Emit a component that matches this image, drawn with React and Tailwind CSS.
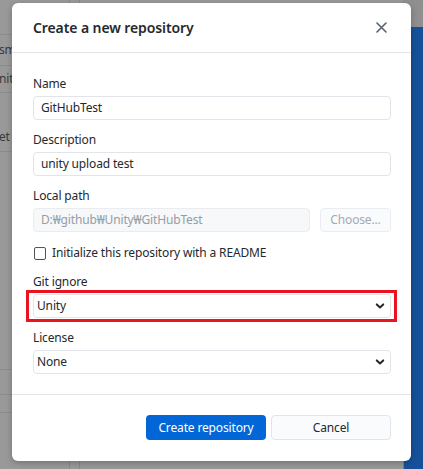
import React from "react";

function Field({ label, children, className = "" }) {
  return (
    <div className={"flex flex-col " + className}>
      <div className="h-[16px] leading-[16px] mb-[4px] text-[12px] text-[#24292e]">{label}</div>
      {children}
    </div>
  );
}

function Input({ value, disabled }) {
  return (
    <div
      className={
        "h-[24px] flex items-center px-[7px] rounded-[4px] border text-[12px] " +
        (disabled
          ? "bg-[#f6f8fa] border-[#eaecef] text-[#959da5]"
          : "bg-white border-[#e1e4e8] text-[#24292e]")
      }
    >
      {value}
    </div>
  );
}

function Select({ value }) {
  return (
    <div className="h-[24px] flex items-center justify-between pl-[3px] pr-[4px] rounded-[4px] border border-[#e1e4e8] bg-white text-[12px] text-[#24292e]">
      <span>{value}</span>
      <svg width="10" height="10" viewBox="0 0 10 10" className="mr-[1px]">
        <path d="M1.8 3.4 L5 6.4 L8.2 3.4" fill="none" stroke="#24292e" strokeWidth="2" strokeLinecap="round" strokeLinejoin="round" />
      </svg>
    </div>
  );
}

export default function App() {
  return (
    <div
      className="relative w-[423px] h-[469px] overflow-hidden bg-[#999999] tracking-[-0.15px]"
      style={{ fontFamily: '"Noto Sans", "Noto Sans CJK KR", sans-serif' }}
    >
      {/* backdrop app */}
      <div className="flex h-full">
        <div className="w-[70px] flex flex-col border-r border-[#8a8a8a] text-[12px] text-[#3a3a3a]">
          <div className="h-[35px] border-b border-[#8c8c8c] shrink-0" />
          <div className="h-[31px] border-b border-[#8c8c8c] flex items-center shrink-0 -ml-[1px]">sm</div>
          <div className="h-[27px] border-b border-[#8c8c8c] flex items-center shrink-0 -ml-[1px]">nit</div>
          <div className="h-[59px] border-b border-[#8c8c8c] flex items-end pb-[5px] shrink-0 -ml-[1px]">et</div>
          <div className="flex-1" />
          <div className="h-[1px] bg-[#8c8c8c] shrink-0" />
          <div className="h-[25px] border-b border-[#8c8c8c] shrink-0" />
          <div className="h-[18px] border-b border-[#8c8c8c] shrink-0" />
          <div className="h-[56px] shrink-0" />
        </div>
        <div className="w-[10px] border-r border-[#8a8a8a]" />
        <div className="flex-1" />
        <div className="w-[20px] flex flex-col">
          <div className="h-[27px] bg-[#8f8f8f]" />
          <div className="flex-1 bg-[#15519a] border-l border-[#6f7f95]" />
        </div>
      </div>

      {/* dialog */}
      <div className="absolute left-[12px] top-[3px] w-[399px] h-[458px] bg-white rounded-[6px] shadow-[0_2px_6px_rgba(0,0,0,0.25)] flex flex-col">
        <div className="h-[50px] shrink-0 flex items-center justify-between pl-[21px] pr-[20px] border-b border-[#e1e4e8]">
          <div className="text-[14px] font-semibold text-[#24292e] tracking-[-0.1px]">Create a new repository</div>
          <svg width="11" height="11" viewBox="0 0 11 11" className="mr-[4px]">
            <path d="M1 1 L10 10 M10 1 L1 10" stroke="#586069" strokeWidth="1.6" strokeLinecap="round" />
          </svg>
        </div>

        <div className="flex flex-col pl-[21px] pr-[20px] pt-[23px]">
          <Field label="Name">
            <Input value="GitHubTest" />
          </Field>
          <Field label="Description" className="mt-[12px]">
            <Input value="unity upload test" />
          </Field>
          <Field label="Local path" className="mt-[12px]">
            <div className="flex gap-[10px]">
              <div className="flex-1">
                <Input value="D:₩github₩Unity₩GitHubTest" disabled />
              </div>
              <div className="w-[71px] h-[24px] flex items-center justify-center rounded-[4px] border border-[#eaecef] bg-[#fafbfc] text-[12px] text-[#a3aab1]">
                Choose...
              </div>
            </div>
          </Field>
          <div className="mt-[13px] h-[16px] flex items-center gap-[6px] text-[12px] text-[#24292e]">
            <div className="w-[12px] h-[13px] ml-[1px] rounded-[2px] border border-[#555] bg-white" />
            <span>Initialize this repository with a README</span>
          </div>
          <Field label="Git ignore" className="mt-[13px]">
            <div className="relative">
              <Select value="Unity" />
              <span className="absolute -left-[7px] -right-[6px] -top-[4px] -bottom-[4px] border-[3px] border-[#e8141f]" />
            </div>
          </Field>
          <Field label="License" className="mt-[12px]">
            <Select value="None" />
          </Field>
        </div>

        <div className="mt-[20px] border-t border-[#e1e4e8] flex-1 flex items-start justify-end gap-[5px] pl-[21px] pr-[20px] pt-[20px]">
          <div className="w-[120px] h-[25px] flex items-center justify-center rounded-[4px] bg-[#0366d6] text-white text-[12px]">
            Create repository
          </div>
          <div className="w-[120px] h-[25px] flex items-center justify-center rounded-[4px] border border-[#e1e4e8] bg-[#fafbfc] text-[#24292e] text-[12px]">
            Cancel
          </div>
        </div>
      </div>
    </div>
  );
}
